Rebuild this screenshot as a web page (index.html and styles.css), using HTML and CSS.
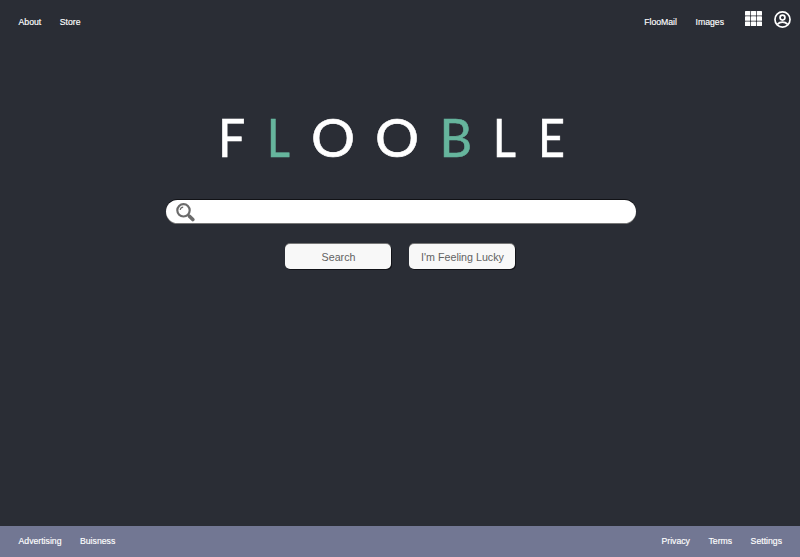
FILE: index.html
```html
<!DOCTYPE html>
<html lang="en">
<head>
<meta charset="utf-8">
<title>Flooble</title>
<link rel="stylesheet" href="styles.css">
</head>
<body>
<header class="topbar">
  <nav class="links"><a>About</a><a>Store</a></nav>
  <div class="tools">
    <nav class="links"><a>FlooMail</a><a>Images</a></nav>
    <svg class="apps" viewBox="0 0 17 15" fill="#fff">
      <rect width="5.200" height="4.600" rx=".6"/><rect x="5.900" width="5.200" height="4.600" rx=".6"/><rect x="11.800" width="5.200" height="4.600" rx=".6"/>
      <rect y="5.200" width="5.200" height="4.600" rx=".6"/><rect x="5.900" y="5.200" width="5.200" height="4.600" rx=".6"/><rect x="11.800" y="5.200" width="5.200" height="4.600" rx=".6"/>
      <rect y="10.400" width="5.200" height="4.600" rx=".6"/><rect x="5.900" y="10.400" width="5.200" height="4.600" rx=".6"/><rect x="11.800" y="10.400" width="5.200" height="4.600" rx=".6"/>
    </svg>
    <svg class="user" viewBox="0 0 16 16" fill="none" stroke="#fff" stroke-width="1.600">
      <circle cx="8" cy="8" r="7.100"/><circle cx="8" cy="6.200" r="2.300"/><path d="M3.400 12.400C4.600 11 6.200 10.500 8 10.500s3.400.5 4.600 1.900"/>
    </svg>
  </div>
</header>
<main class="main">
  <h1 class="logo"><span class="f">F</span><span class="l accent">L</span><span class="o">O</span><span class="o">O</span><span class="b accent">B</span><span class="l">L</span><span class="e">E</span></h1>
  <div class="searchbox">
    <svg class="glass" viewBox="0 0 19 19" fill="none" stroke="#6b6b6b">
      <circle cx="7.500" cy="7.300" r="6.200" stroke-width="2.200"/>
      <path d="M4.200 7A3.200 3.200 0 0 1 7.200 4.100" stroke-width="1.100"/>
      <path d="M11.800 11.600l2 2" stroke-width="2.600"/>
      <path d="M13.700 13.500l3.100 3.100" stroke-width="3.600" stroke-linecap="round"/>
    </svg>
  </div>
  <div class="buttons"><button>Search</button><button>I'm Feeling Lucky</button></div>
</main>
<footer class="footer">
  <nav class="links"><a>Advertising</a><a>Buisness</a></nav>
  <nav class="links"><a>Privacy</a><a>Terms</a><a>Settings</a></nav>
</footer>
</body>
</html>
```
FILE: styles.css
```css
* { box-sizing: border-box; }
body {
  margin: 0;
  height: 557px;
  display: flex;
  flex-direction: column;
  overflow: hidden;
  background: #2a2d35;
  color: #fff;
  font-family: "Liberation Sans", Arial, sans-serif;
}
.topbar { height: 44px; display: flex; justify-content: space-between; padding: 0 9px 0 18.5px; }
.links { display: flex; gap: 18.5px; font-size: 8.7px; line-height: 12px; -webkit-text-stroke: .15px currentColor; }
.topbar .links { padding-top: 16px; }
.tools { display: flex; }
.apps { width: 17px; height: 15px; margin: 11px 12px 0 21px; }
.user { width: 17px; height: 17px; margin-top: 10.5px; }
.main { flex: 1; display: flex; flex-direction: column; align-items: center; }
.logo {
  display: flex;
  width: 366px;
  height: 60px;
  margin: 62.5px 0 33.5px;
  font: 400 53px/60px Lato, sans-serif;
  -webkit-text-stroke: .6px currentColor;
}
.logo span { transform-origin: 0 50%; }
.logo .f { width: 49.5px; transform: translateX(1px) scaleX(.91); }
.logo .l { width: 44px; transform: scaleX(.84); }
.logo .o { width: 64px; transform: scaleX(1.04); }
.logo .b { width: 54.5px; transform: translateX(.5px) scaleX(.95); }
.logo .e { transform: translateX(1px) scaleX(.88); }
.accent { color: #66b59d; }
.searchbox {
  width: 470px;
  height: 23px;
  margin-left: 1px;
  padding: 3px 0 0 10.5px;
  border-radius: 12px;
  background: #fff;
  box-shadow: 0 -1px 0 #111216, 0 1px 0 #777;
}
.glass { display: block; width: 19px; height: 19px; }
.buttons { display: flex; gap: 18px; margin-top: 21px; }
button {
  width: 106px;
  height: 25px;
  padding: 0 0 0 1px;
  border: 0;
  border-radius: 5px;
  background: #f8f8f8;
  box-shadow: 1px 1px 0 #121318, 0 -1px 0 #777;
  color: #626262;
  font: 10.7px "Liberation Sans", Arial, sans-serif;
}
.footer {
  height: 31px;
  display: flex;
  justify-content: space-between;
  padding: 9px 18px 0 18.5px;
  background: #727793;
}
```
